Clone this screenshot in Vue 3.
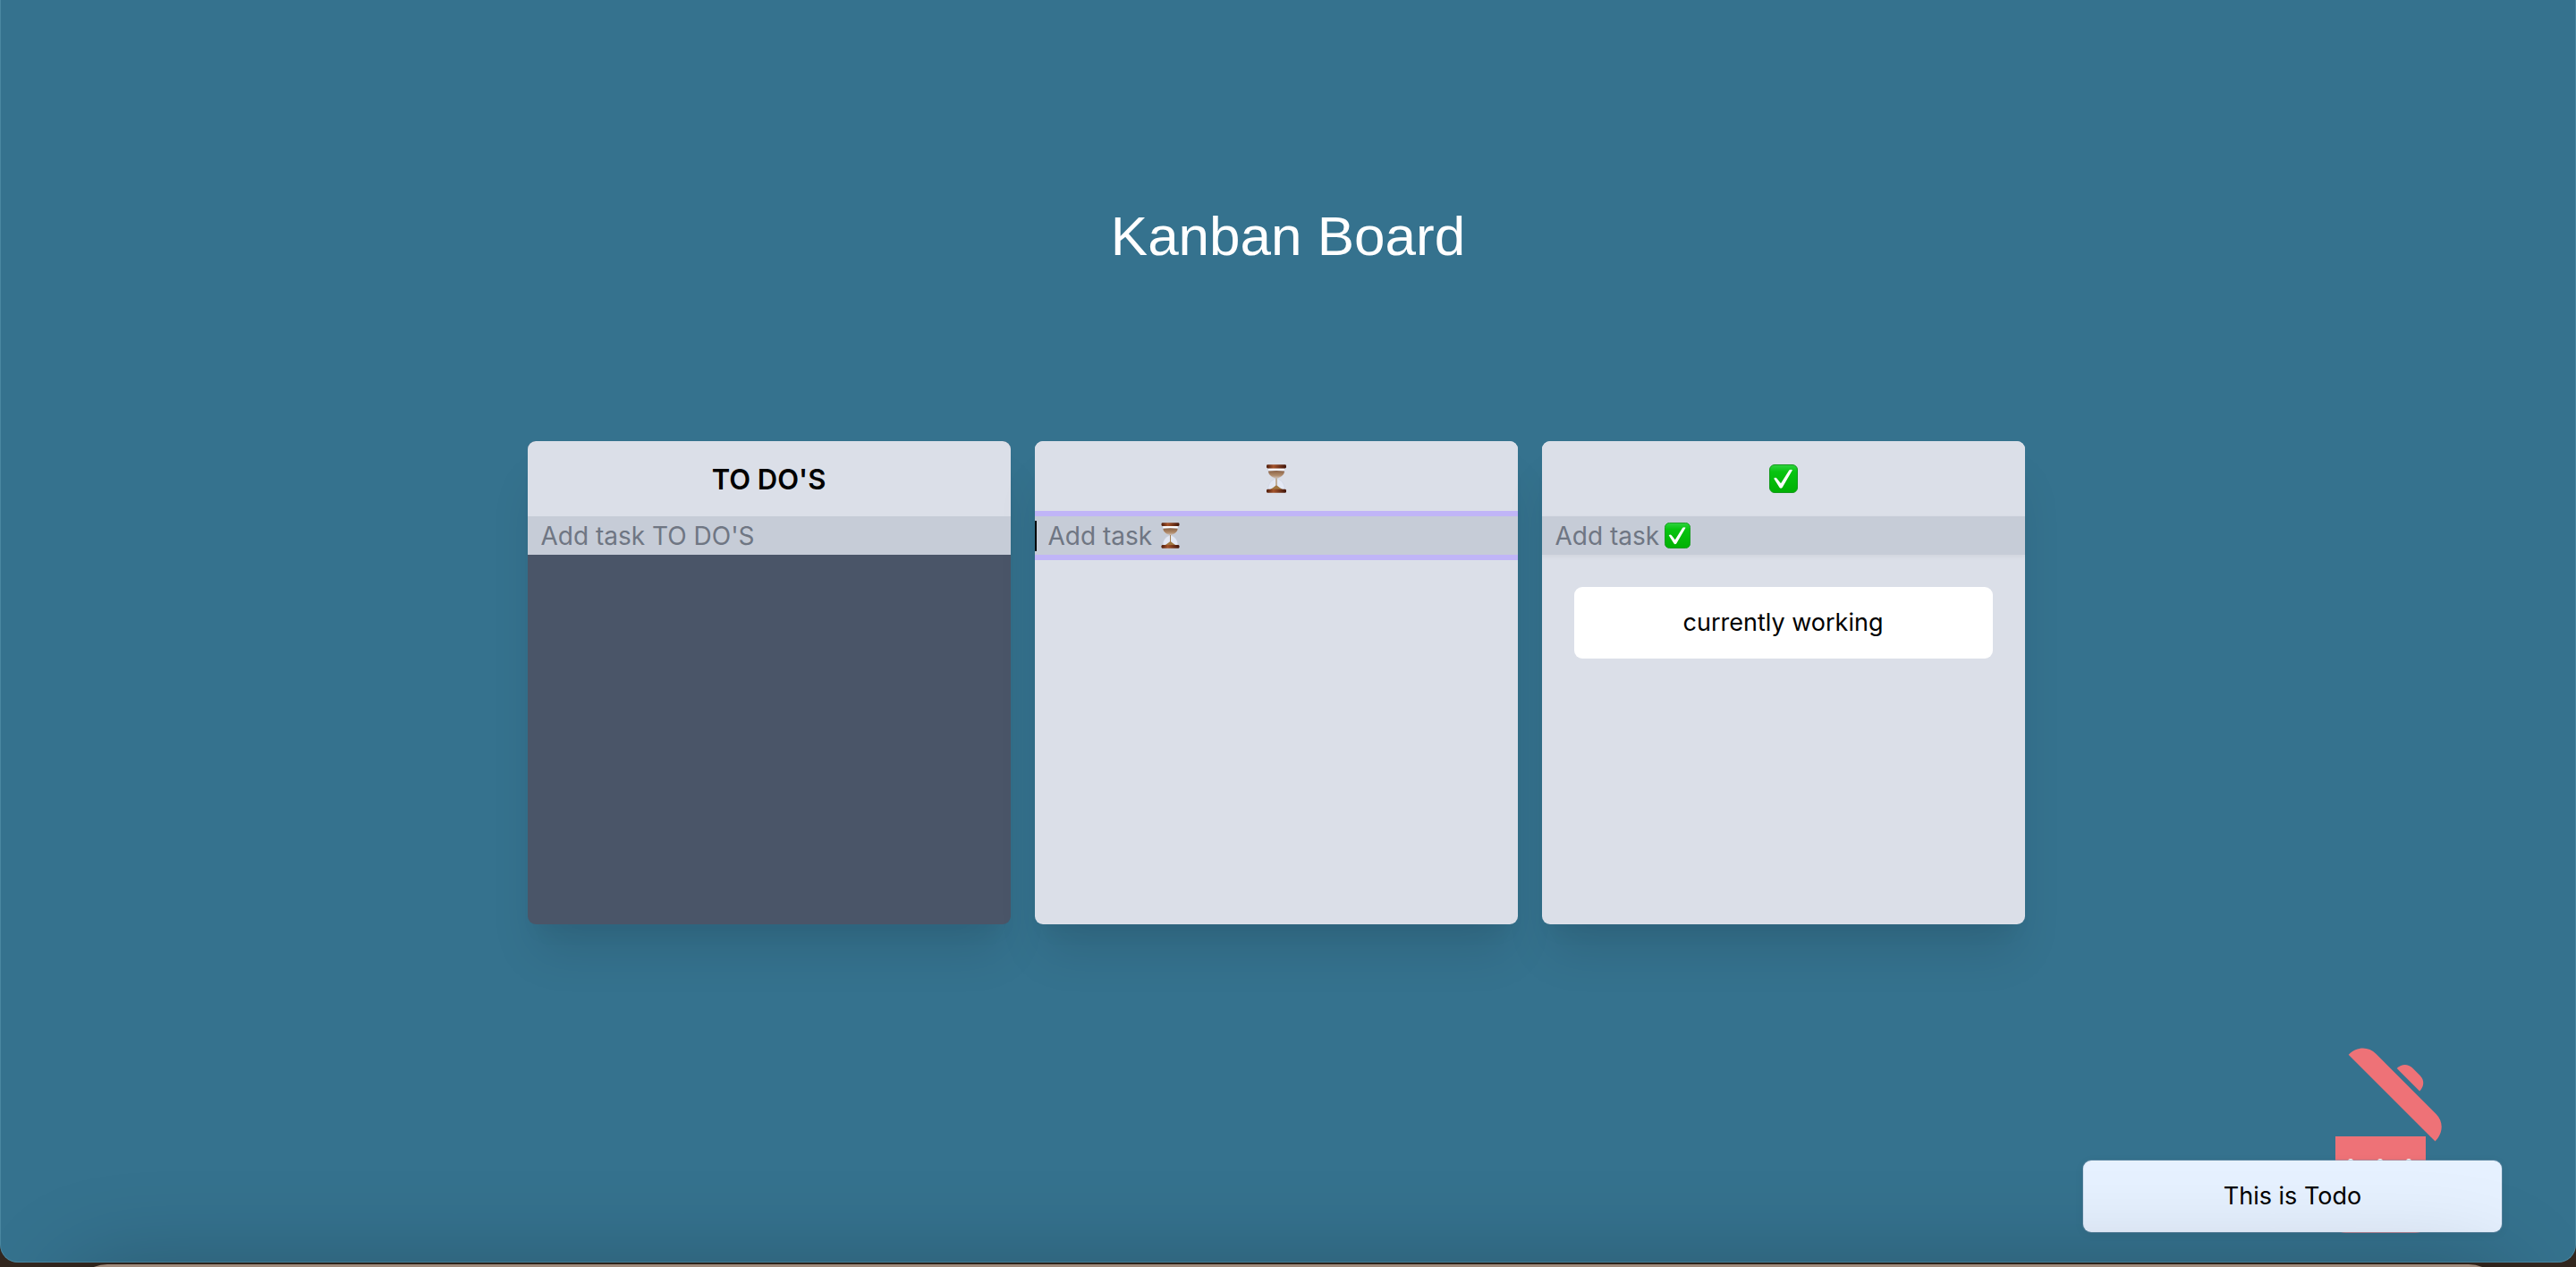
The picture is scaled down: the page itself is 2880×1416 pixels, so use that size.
<script setup>
import { ref } from 'vue'

const columns = ref([
  { id: 'todo', title: "TO DO'S", icon: null, dark: true, focused: false, tasks: [] },
  { id: 'doing', title: '', icon: 'hourglass', dark: false, focused: true, tasks: [] },
  { id: 'done', title: '', icon: 'check', dark: false, focused: false, tasks: ['currently working'] },
])
</script>

<template>
  <div class="desktop">
    <svg class="defs" aria-hidden="true">
      <defs>
        <linearGradient id="green" x1="0" y1="0" x2="0" y2="1">
          <stop offset="0" stop-color="#2fd340" />
          <stop offset="0.25" stop-color="#08c410" />
          <stop offset="1" stop-color="#00b004" />
        </linearGradient>
        <linearGradient id="wood" x1="0" y1="0" x2="1" y2="0">
          <stop offset="0" stop-color="#4f1d0b" />
          <stop offset="0.35" stop-color="#a4532b" />
          <stop offset="1" stop-color="#40150a" />
        </linearGradient>
        <linearGradient id="sand" x1="0" y1="0" x2="0" y2="1">
          <stop offset="0" stop-color="#8a6246" />
          <stop offset="0.6" stop-color="#b08b6a" />
          <stop offset="1" stop-color="#cfc6c2" />
        </linearGradient>
        <symbol id="check" viewBox="0 0 32 32">
          <rect x="0.5" y="0.5" width="31" height="31" rx="5.5" fill="url(#green)" stroke="#149a1c" />
          <path d="M5.2 15.8 Q7 14 8.6 15.7 L13 21.3 L22.3 6.4 Q24 5.4 26 6.3 L14.6 26 Q13 27.6 11.6 26 Z" fill="#fff" />
        </symbol>
        <symbol id="hourglass" viewBox="0 0 32 32">
          <path d="M6.8 4 H25.2 V8 C25 12 20 14.5 17 15.8 C21 17.5 25.4 21 25.2 28 H6.8 C6.6 21 11 17.5 15 15.8 C12 14.5 7 12 6.8 8Z" fill="#e3e8f4" stroke="#c6ccdc" stroke-width="0.5" />
          <rect x="7" y="4.6" width="18" height="1.8" fill="#fff" />
          <path d="M7 7.4 Q16 6.4 25 7.4 C25 11.8 20.5 14.4 16.6 15.8 H15.4 C11.5 14.4 7 11.8 7 7.4Z" fill="url(#sand)" />
          <path d="M15.5 15.4 H16.5 V23.4 Q19.5 26 23 28 H9 Q12.500 26 15.500 23.400Z" fill="#a07640" />
          <rect x="5" y="0.3" width="22" height="4.1" rx="1.4" fill="url(#wood)" />
          <rect x="5" y="27.700" width="22" height="4.1" rx="1.4" fill="url(#wood)" />
        </symbol>
      </defs>
    </svg>

    <main class="window">
      <h1 class="title">Kanban Board</h1>

      <div class="board">
        <section v-for="col in columns" :key="col.id" class="column" :class="{ dark: col.dark }">
          <h2 class="head">
            <svg v-if="col.icon" class="head-icon" role="img" :aria-label="col.id"><use :href="'#' + col.icon" /></svg>
            <template v-else>{{ col.title }}</template>
          </h2>
          <div class="entry" :class="{ focused: col.focused }">
            <input
              :id="col.id"
              class="field"
              type="text"
              :placeholder="('Add task ' + col.title).trim()"
              :aria-label="'Add task ' + col.id"
            />
            <svg v-if="col.icon" class="field-icon" aria-hidden="true"><use :href="'#' + col.icon" /></svg>
            <span v-if="col.focused" class="caret"></span>
          </div>
          <ul class="tasks">
            <li v-for="task in col.tasks" :key="task" class="task">{{ task }}</li>
          </ul>
        </section>
      </div>

      <svg class="trash" viewBox="0 0 160 240" role="img" aria-label="Delete">
        <g fill="#ee7277">
          <g transform="translate(25.7 28.7) rotate(45)">
            <path d="M0 0 C0 -13 9 -22.4 21 -22.4 H116 C128 -22.4 137 -13 137 0Z" />
            <path d="M49 -27.4 C49 -35 54 -40 61 -40 H73 C80 -40 85 -35 85 -27.4Z" />
          </g>
          <path d="M11 120 H112 V216 Q112 228 100 228 H23 Q11 228 11 216Z" />
        </g>
        <path d="M28 148 V205 M61 148 V205 M93 148 V205" stroke="#fff" stroke-width="6" stroke-linecap="round" />
      </svg>
      <div class="task dragged">This is Todo</div>
    </main>
    <div class="dock"></div>
  </div>
</template>

<style>
body {
  margin: 0;
}
</style>

<style scoped>
.desktop {
  position: relative;
  display: flex;
  flex-direction: column;
  box-sizing: border-box;
  min-height: 100vh;
  padding-bottom: 5px;
  overflow: hidden;
  background: #33271f;
  font-family: Inter, "Liberation Sans", sans-serif;
  color: #000;
}
.defs {
  position: absolute;
  width: 0;
  height: 0;
}
.window {
  position: relative;
  flex: 1;
  box-sizing: border-box;
  border: 1px solid #4a87a1;
  border-top: 0;
  border-radius: 0 0 20px 20px;
  background: #35728e;
}
.title {
  margin: 0;
  padding-top: 218px;
  font-family: "Liberation Sans", Arial, sans-serif;
  font-size: 62px;
  line-height: 92px;
  font-weight: 400;
  text-align: center;
  color: #fff;
}
.board {
  display: flex;
  justify-content: center;
  margin-top: 183px;
}
.column {
  width: 540px;
  height: 540px;
  margin-right: 27px;
  overflow: hidden;
  border-radius: 9px;
  background: #dbdfe8;
  box-shadow: 0 40px 50px -10px rgba(0, 0, 0, 0.1), 0 20px 20px -10px rgba(0, 0, 0, 0.04);
}
.dark {
  background: #4a5568;
}
.head {
  display: flex;
  align-items: center;
  justify-content: center;
  height: 84px;
  margin: 0;
  background: #dbdfe8;
  font-size: 31px;
  font-weight: 600;
}
.head-icon {
  width: 32px;
  height: 32px;
}
.entry {
  position: relative;
  height: 43px;
  background: #c6ccd7;
  box-shadow: 0 2px 5px rgba(0, 0, 0, 0.05);
}
.dark .entry {
  box-shadow: none;
}
.focused {
  box-shadow: 0 0 0 6px #c0b5f7;
}
.field {
  display: block;
  box-sizing: border-box;
  width: 100%;
  height: 43px;
  padding: 0 15px;
  border: 0;
  outline: 0;
  background: transparent;
  font-family: inherit;
  font-size: 28px;
}
.field::placeholder {
  color: #6f7683;
  opacity: 1;
}
.field-icon {
  position: absolute;
  top: 7px;
  left: 137px;
  width: 29px;
  height: 29px;
}
.caret {
  position: absolute;
  top: 5px;
  left: 0;
  width: 2px;
  height: 34px;
  background: #000;
}
.tasks {
  margin: 0;
  padding: 36px;
  list-style: none;
}
.task {
  height: 80px;
  border-radius: 9px;
  background: #fff;
  font-size: 27px;
  line-height: 80px;
  text-align: center;
}
.trash {
  position: absolute;
  right: 119px;
  bottom: 20px;
  width: 160px;
  height: 240px;
}
.dragged {
  position: absolute;
  right: 82px;
  bottom: 33px;
  width: 468px;
  background: #e6f1ff;
  box-shadow: 0 0 0 1px rgba(120, 150, 175, 0.5), 0 2px 12px rgba(0, 0, 0, 0.06);
}
.dock {
  position: absolute;
  right: 80px;
  left: 80px;
  bottom: -97px;
  height: 100px;
  border-radius: 40px 40px 0 0;
  background: #a08b7c;
  box-shadow: 0 10px 110px rgba(0, 0, 0, 0.25);
}
</style>
